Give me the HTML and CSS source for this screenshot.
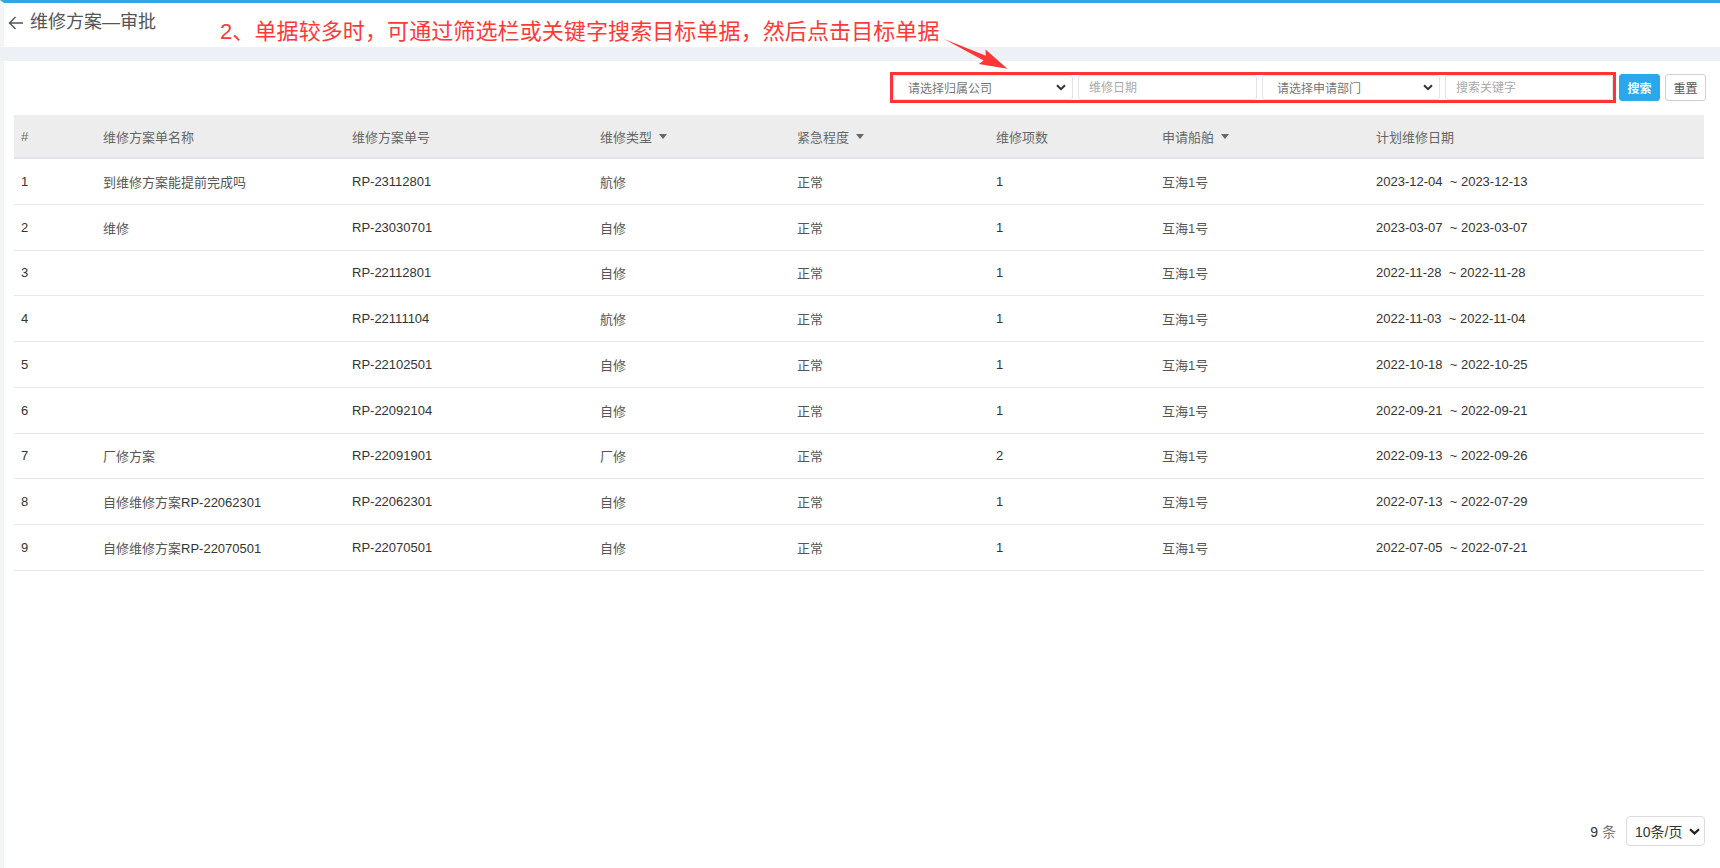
FILE: index.html
```html
<!DOCTYPE html>
<html lang="zh-CN">
<head>
<meta charset="utf-8">
<title>维修方案—审批</title>
<link rel="stylesheet" href="styles.css">
</head>
<body>
<div class="page">
  <header class="titlebar">
    <span class="back">
      <svg width="16" height="16" viewBox="0 0 16 16"><path d="M15 8H1.5M7.5 2L1.5 8l6 6" fill="none" stroke="#555" stroke-width="1.4"/></svg>
    </span>
    <h1 class="title">维修方案—审批</h1>
    <p class="note">2、单据较多时，可通过筛选栏或关键字搜索目标单据，然后点击目标单据</p>
  </header>
  <div class="band"></div>
  <main class="content">
    <div class="toolbar">
      <div class="filters">
        <div class="field select s1"><span>请选择归属公司</span><svg width="10" height="7" viewBox="0 0 10 7"><path d="M1 1.2l4 4 4-4" fill="none" stroke="#333" stroke-width="2"/></svg></div>
        <input class="field input i1" placeholder="维修日期">
        <div class="field select s2"><span>请选择申请部门</span><svg width="10" height="7" viewBox="0 0 10 7"><path d="M1 1.2l4 4 4-4" fill="none" stroke="#333" stroke-width="2"/></svg></div>
        <input class="field input i2" placeholder="搜索关键字">
      </div>
      <button class="btn primary">搜索</button>
      <button class="btn">重置</button>
    </div>

    <div class="grid">
      <div class="row head">
        <div>#</div>
        <div>维修方案单名称</div>
        <div>维修方案单号</div>
        <div>维修类型<i class="caret"></i></div>
        <div>紧急程度<i class="caret"></i></div>
        <div>维修项数</div>
        <div>申请船舶<i class="caret"></i></div>
        <div>计划维修日期</div>
      </div>
      <div class="row"><div>1</div><div class="cn">到维修方案能提前完成吗</div><div>RP-23112801</div><div class="cn">航修</div><div class="cn">正常</div><div>1</div><div class="cn">互海1号</div><div class="date">2023-12-04  ~ 2023-12-13</div></div>
      <div class="row"><div>2</div><div class="cn">维修</div><div>RP-23030701</div><div class="cn">自修</div><div class="cn">正常</div><div>1</div><div class="cn">互海1号</div><div class="date">2023-03-07  ~ 2023-03-07</div></div>
      <div class="row"><div>3</div><div class="cn"></div><div>RP-22112801</div><div class="cn">自修</div><div class="cn">正常</div><div>1</div><div class="cn">互海1号</div><div class="date">2022-11-28  ~ 2022-11-28</div></div>
      <div class="row"><div>4</div><div class="cn"></div><div>RP-22111104</div><div class="cn">航修</div><div class="cn">正常</div><div>1</div><div class="cn">互海1号</div><div class="date">2022-11-03  ~ 2022-11-04</div></div>
      <div class="row"><div>5</div><div class="cn"></div><div>RP-22102501</div><div class="cn">自修</div><div class="cn">正常</div><div>1</div><div class="cn">互海1号</div><div class="date">2022-10-18  ~ 2022-10-25</div></div>
      <div class="row"><div>6</div><div class="cn"></div><div>RP-22092104</div><div class="cn">自修</div><div class="cn">正常</div><div>1</div><div class="cn">互海1号</div><div class="date">2022-09-21  ~ 2022-09-21</div></div>
      <div class="row"><div>7</div><div class="cn">厂修方案</div><div>RP-22091901</div><div class="cn">厂修</div><div class="cn">正常</div><div>2</div><div class="cn">互海1号</div><div class="date">2022-09-13  ~ 2022-09-26</div></div>
      <div class="row"><div>8</div><div class="cn">自修维修方案<b>RP-22062301</b></div><div>RP-22062301</div><div class="cn">自修</div><div class="cn">正常</div><div>1</div><div class="cn">互海1号</div><div class="date">2022-07-13  ~ 2022-07-29</div></div>
      <div class="row"><div>9</div><div class="cn">自修维修方案<b>RP-22070501</b></div><div>RP-22070501</div><div class="cn">自修</div><div class="cn">正常</div><div>1</div><div class="cn">互海1号</div><div class="date">2022-07-05  ~ 2022-07-21</div></div>
    </div>

    <div class="pager">
      <span class="total"><b>9</b> 条</span>
      <div class="pagesize"><span>10条/页</span><svg width="11" height="7" viewBox="0 0 11 7"><path d="M1 1.2l4.5 4.2 4.5-4.2" fill="none" stroke="#222" stroke-width="2.2"/></svg></div>
    </div>
  </main>

  <svg class="callout" width="1720" height="110" viewBox="0 0 1720 110">
    <polygon points="944,39 985.9,55.8 985.5,49.6 1007.4,68.7 978.7,64 983.7,60.4" fill="#ff3636"/>
  </svg>
</div>
</body>
</html>
```

FILE: styles.css
```css
* { box-sizing: border-box; }

html, body {
  margin: 0;
  padding: 0;
  background: #fff;
}

body {
  font-family: "Liberation Sans", Arial, "Noto Sans CJK SC", sans-serif;
  font-size: 13px;
  color: #333;
}

.page {
  position: relative;
  height: 868px;
  border-top: 3px solid #2ea6e8;
  border-left: 4px solid #f4f5f7;
  display: flex;
  flex-direction: column;
}

.titlebar {
  height: 44px;
  display: flex;
  align-items: flex-start;
  padding-left: 4px;
}

.back {
  display: flex;
  margin-top: 12px;
  width: 16px;
  height: 16px;
}

.title {
  margin: 6px 0 0 6px;
  font-size: 18px;
  line-height: 26px;
  font-weight: normal;
  color: #555;
}

.note {
  margin: 14px 0 0 64px;
  font-size: 22px;
  line-height: 30px;
  color: #ff3838;
  letter-spacing: 0.1px;
}

.band {
  height: 14px;
  background: #edf0f4;
  margin-left: -4px;
}

.content {
  flex: 1;
  display: flex;
  flex-direction: column;
  padding: 11px 16px 0 10px;
}

.toolbar {
  display: flex;
  justify-content: flex-end;
  align-items: center;
  height: 31px;
  margin-right: -2px;
  margin-bottom: 12px;
}

.filters {
  display: flex;
  gap: 5px;
  border: 3px solid #ff3535;
  height: 31px;
  width: 726px;
  padding: 0;
}

.field {
  height: 25px;
  border: 1px solid #e4e4e4;
  border-radius: 3px;
  background: #fff;
  font-family: "Liberation Sans", Arial, "Noto Sans CJK SC", sans-serif;
  font-size: 12px;
}

.select {
  display: flex;
  align-items: center;
  justify-content: space-between;
  padding: 0 6px 0 14px;
  color: #777;
}

.s1 { width: 180px; }
.s2 { width: 178px; }

.input {
  padding: 0 10px;
  outline: none;
  color: #333;
}

.input::placeholder { color: #aaa; }

.i1 { width: 179px; }
.i2 { width: 168px; }

.btn {
  width: 41px;
  height: 27px;
  margin-left: 5px;
  border: 1px solid #cfcfcf;
  border-radius: 3px;
  background: #fff;
  color: #555;
  font-family: "Liberation Sans", Arial, "Noto Sans CJK SC", sans-serif;
  font-size: 12px;
  padding: 0;
}

.btn.primary {
  margin-left: 3px;
  background: #29a8ea;
  border-color: #29a8ea;
  color: #fff;
  font-weight: bold;
}

.grid {
  display: flex;
  flex-direction: column;
}

.row {
  display: grid;
  grid-template-columns: 82px 249px 248px 197px 199px 166px 214px 335px;
  height: 45.75px;
  border-bottom: 1px solid #e6e7e9;
  align-items: center;
}

.row > div {
  padding-left: 7px;
  white-space: nowrap;
}

.row > .date { white-space: pre; }

.row .cn { color: #555; }
.row .cn b { font-weight: normal; color: #333; }

.row.head {
  height: 44px;
  background: #ededed;
  border-bottom: 2px solid #e1e4e8;
  color: #666;
}

.row.head > div { color: #666; display: flex; align-items: center; }

.caret {
  display: inline-block;
  margin-left: 7px;
  width: 0;
  height: 0;
  border-left: 4px solid transparent;
  border-right: 4px solid transparent;
  border-top: 5px solid #666;
}

.pager {
  margin-top: auto;
  display: flex;
  justify-content: flex-end;
  align-items: center;
  padding-bottom: 22px;
  margin-right: -1px;
}

.total {
  font-size: 14px;
  color: #777;
}

.total b {
  font-weight: normal;
  color: #333;
}

.pagesize {
  margin-left: 10px;
  width: 79px;
  height: 30px;
  border: 1px solid #dcdcdc;
  border-radius: 4px;
  display: flex;
  align-items: center;
  justify-content: space-between;
  padding: 0 4px 0 8px;
  font-size: 14px;
  color: #333;
}

.callout {
  position: absolute;
  left: -4px;
  top: -3px;
  pointer-events: none;
}
```
